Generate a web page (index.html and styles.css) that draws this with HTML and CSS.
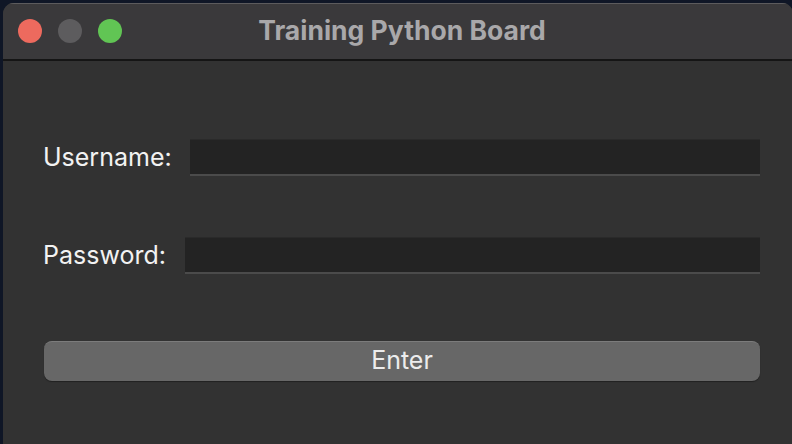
FILE: index.html
```html
<!DOCTYPE html>
<html>
<head>
<meta charset="utf-8">
<link rel="stylesheet" href="styles.css">
</head>
<body>
<div class="window">
  <div class="titlebar">
    <div class="lights">
      <span class="light red"></span>
      <span class="light grey"></span>
      <span class="light green"></span>
    </div>
    <div class="title">Training Python Board</div>
  </div>
  <div class="content">
    <div class="row row-user">
      <label class="label">Username:</label>
      <div class="field"></div>
    </div>
    <div class="row row-pass">
      <label class="label">Password:</label>
      <div class="field"></div>
    </div>
    <div class="button">Enter</div>
  </div>
</div>
</body>
</html>
```

FILE: styles.css
```css
html, body {
  margin: 0;
  padding: 0;
  width: 792px;
  height: 444px;
  overflow: hidden;
  background: #0f1626;
  font-family: Inter, "Noto Sans", sans-serif;
}
.window {
  margin: 3px 0 0 3px;
  width: 790px;
  height: 460px;
  border-radius: 11px 11px 0 0;
  background: #323232;
  overflow: hidden;
}
.titlebar {
  position: relative;
  height: 55px;
  background: #3a393b;
  border-top: 1px solid #5c5b5d;
  border-bottom: 2px solid #151515;
  display: flex;
  align-items: center;
  justify-content: center;
}
.lights {
  position: absolute;
  left: 15px;
  top: 15px;
  display: flex;
  gap: 16px;
}
.light {
  width: 24px;
  height: 24px;
  border-radius: 50%;
}
.red { background: #ed6a5e; }
.grey { background: #5d5c5e; }
.green { background: #61c554; }
.title {
  color: #a9a8aa;
  font-weight: 700;
  font-size: 26.5px;
  margin-left: 8px;
  margin-top: -3px;
}
.content {
  padding: 78px 0 0 40px;
  width: 717px;
  display: flex;
  flex-direction: column;
}
.row {
  display: flex;
  align-items: center;
  height: 36px;
}
.row-pass {
  margin-top: 62px;
}
.label {
  color: #f2f2f2;
  font-size: 25px;
  flex: none;
}
.row-user .label { margin-right: 18px; }
.row-pass .label { margin-right: 19px; }
.field {
  flex: 1;
  height: 34px;
  background: #232323;
  border-bottom: 2px solid #4b4b4b;
  border-top: 1px solid #2a2a2a;
  box-sizing: content-box;
}
.button {
  margin-top: 68px;
  margin-left: 1px;
  height: 40px;
  border-radius: 8px;
  background: #676767;
  border-top: 1px solid #7c7c7c;
  box-sizing: border-box;
  box-shadow: 0 1px 1px rgba(0,0,0,0.35);
  color: #ececec;
  font-size: 25px;
  padding-bottom: 3px;
  display: flex;
  align-items: center;
  justify-content: center;
}
```
